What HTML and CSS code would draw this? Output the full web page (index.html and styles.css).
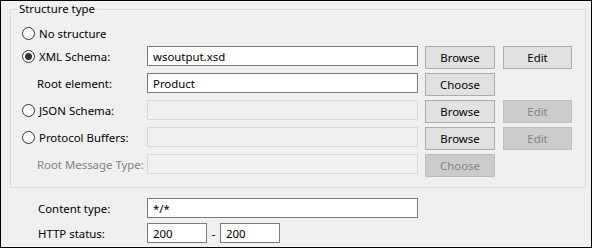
FILE: index.html
```html
<!DOCTYPE html>
<html lang="en">
<head>
	<meta charset="UTF-8">
	<title>Structure type</title>
	<link rel="stylesheet" href="styles.css">
</head>
<body>

	<!-- Structure group -->
	<fieldset class="group">
		<legend>Structure type</legend>

		<label class="radio-row">
			<input type="radio" name="structure"> No structure
		</label>

		<div class="structure-grid">
			<label class="radio-label"><input type="radio" name="structure" checked> XML Schema:</label>
			<input class="field" type="text" value="wsoutput.xsd">
			<button class="btn">Browse</button>
			<button class="btn">Edit</button>

			<label class="sub-label">Root element:</label>
			<input class="field" type="text" value="Product">
			<button class="btn">Choose</button>
			<span></span>

			<label class="radio-label"><input type="radio" name="structure"> JSON Schema:</label>
			<input class="field" type="text" disabled>
			<button class="btn">Browse</button>
			<button class="btn" disabled>Edit</button>

			<label class="radio-label"><input type="radio" name="structure"> Protocol Buffers:</label>
			<input class="field" type="text" disabled>
			<button class="btn">Browse</button>
			<button class="btn" disabled>Edit</button>

			<label class="sub-label disabled">Root Message Type:</label>
			<input class="field" type="text" disabled>
			<button class="btn" disabled>Choose</button>
			<span></span>
		</div>
	</fieldset>

	<!-- Response settings -->
	<div class="response-grid">
		<label class="plain-label">Content type:</label>
		<input class="field wide" type="text" value="*/*">

		<label class="plain-label">HTTP status:</label>
		<div class="status-range">
			<input class="field short" type="text" value="200">
			<span class="dash">-</span>
			<input class="field short" type="text" value="200">
		</div>
	</div>

</body>
</html>
```

FILE: styles.css
```css
/* Global Styles */
html, body {
	margin: 0;
}

body {
	width: 592px;
	height: 248px;
	box-sizing: border-box;
	border: 1px solid #000;
	background-color: #f0f0f0;
	font-family: 'Noto Sans', sans-serif;
	font-size: 11.4px;
	color: #000;
	overflow: hidden;
}

/* Group box */
.group {
	margin: 1px 5px 0 9px;
	padding: 7px 11px 10px 11px;
	border: 1px solid #dcdcdc;
	min-width: 0;
}

.group legend {
	padding: 0 2px;
	margin-left: -5px;
	line-height: 14px;
}

.radio-row {
	display: flex;
	align-items: center;
	height: 20px;
	margin-bottom: 3px;
}

/* Radio buttons */
input[type="radio"] {
	appearance: none;
	-webkit-appearance: none;
	width: 13px;
	height: 13px;
	margin: 0 4px 0 0;
	border: 1px solid #333;
	border-radius: 50%;
	background: #fff;
	box-sizing: border-box;
	position: relative;
	flex: none;
}

input[type="radio"]:checked::after {
	content: "";
	position: absolute;
	left: 2px;
	top: 2px;
	width: 7px;
	height: 7px;
	border-radius: 50%;
	background: #333;
}

.structure-grid {
	display: grid;
	grid-template-columns: 118px 271px 70px 70px;
	grid-auto-rows: 23px;
	column-gap: 7px;
	row-gap: 4px;
}

.structure-grid .btn:nth-child(4n) {
	margin-left: 1px;
}

.radio-label,
.sub-label,
.plain-label {
	display: flex;
	align-items: center;
	height: 20px;
	white-space: nowrap;
}

.sub-label {
	padding-left: 15px;
}

.sub-label.disabled {
	color: #838383;
}

/* Text fields */
.field {
	height: 20px;
	box-sizing: border-box;
	border: 1px solid #7a7a7a;
	background: #fff;
	padding: 0 5px;
	font-family: inherit;
	font-size: inherit;
	color: #000;
	outline: none;
	margin: 0;
}

.field:disabled {
	border-color: #d9d9d9;
	background: #f0f0f0;
}

/* Buttons */
.btn {
	height: 23px;
	box-sizing: border-box;
	border: 1px solid #adadad;
	background: #e1e1e1;
	font-family: inherit;
	font-size: inherit;
	color: #000;
	padding: 0;
	margin: 0;
}

.btn:disabled {
	border-color: #bfbfbf;
	background: #cccccc;
	color: #838383;
}

/* Response settings */
.response-grid {
	display: grid;
	grid-template-columns: 109px 271px;
	row-gap: 5px;
	margin-top: 10px;
	padding-left: 37px;
}

.status-range {
	display: flex;
	align-items: center;
}

.field.short {
	width: 60px;
}

.dash {
	width: 13px;
	text-align: center;
}
```
